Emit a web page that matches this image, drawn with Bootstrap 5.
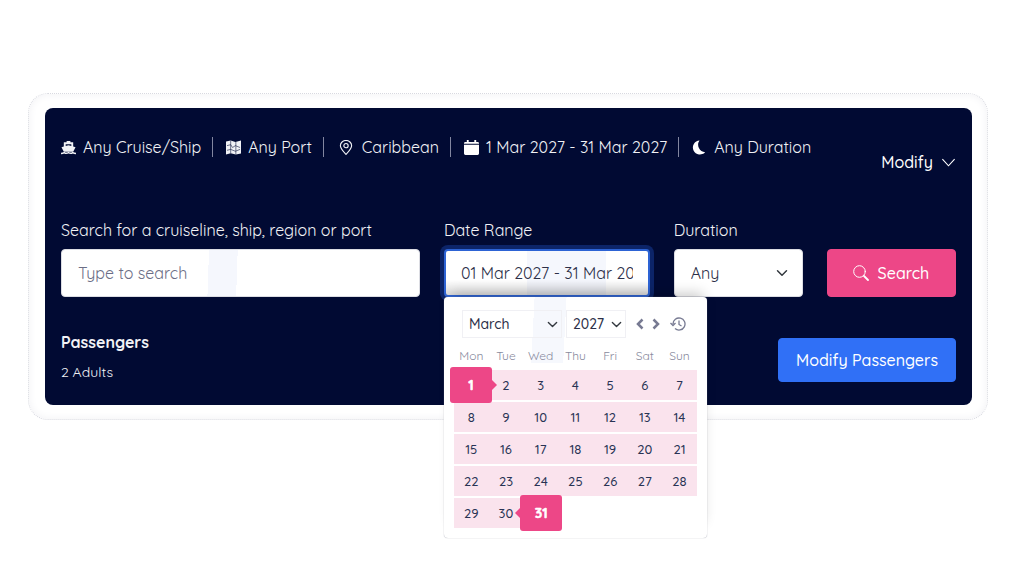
<!DOCTYPE html>
<html lang="en">
<head>
<meta charset="utf-8">
<meta name="viewport" content="width=device-width, initial-scale=1">
<title>Cruise search</title>
<link href="https://cdn.jsdelivr.net/npm/bootstrap@5.3.0/dist/css/bootstrap.min.css" rel="stylesheet">
<style>
  body { font-family: Quicksand, Lato, sans-serif; font-size: 16px; line-height: 24px; color: #2c2f48; background: #fff; }
  .page-wrap { padding: 93px 36px 32px 28px; }
  .frame { border: 1px dotted #d8d9e0; border-radius: 20px; padding: 14px 15px 14px 16px; background: #fff; box-shadow: inset 0 0 8px #f1f1f4; }
  .search-panel { background: #010a33; color: #f1f2f6; border-radius: 8px; padding: 16px; min-height: 297px; }
  .summary { padding-top: 13px; }
  .summary-item { display: flex; align-items: center; border-right: 1px solid #8286a0; height: 20px; white-space: nowrap; padding-right: 11px; margin-right: 13px; }
  .summary-item:last-child { border: 0; }
  .summary svg { margin-right: 7px; width: 15px; height: 15px; }
  .summary .pin-icon { width: 18px; }
  .modify-toggle { color: #fff; background: none; border: 0; padding: 0; margin-top: 26px; font-weight: 500; }
  .fields { margin-top: 44px; }
  .fields label { display: block; margin-bottom: 7px; }
  .field { height: 48px; border: 1px solid #dcdde3; border-radius: 4px; padding: 0 16px; font-size: 16px; color: #2c2f48; }
  .field::placeholder { color: #6c6e86; }
  .field-search { background: linear-gradient(92deg, transparent 41%, #f5f7fd 41%, #f5f7fd 49%, transparent 49%) #fff; }
  .field-date, .field-date:focus { border: 2px solid #2d63d4; padding: 0 15px; box-shadow: 0 0 0 4px #0c2468; background: linear-gradient(0deg, rgba(0,0,0,.14), transparent 35%), linear-gradient(90deg, transparent 40%, #f5f7fd 40%, #f5f7fd 79%, transparent 79%) #fff; }
  .field-duration { background-color: #fff; background-position: right 14px center; background-size: 12px; }
  .btn-search { background: #ed4787; border-color: #ed4787; color: #fff; height: 48px; margin-top: 31px; border-radius: 4px; font-size: 16px; font-weight: 500; }
  .btn-passengers { background: #3070f6; border-color: #3070f6; height: 44px; padding: 0 17px; border-radius: 4px; font-size: 16px; font-weight: 500; margin-top: 8px; }
  .calendar { position: absolute; top: 100%; left: 12px; z-index: 10; width: 263px; padding: 13px 10px 8px; background: linear-gradient(93deg, transparent 34%, #f6f8fd 34%, #f6f8fd 46%, transparent 46%) 0 0 / 100% 66px no-repeat #fff; border-radius: 4px; box-shadow: 0 0 1px #8c8e9c, 2px -10px 12px -6px rgba(0,0,0,.2); font-size: 13px; }
  .cal-select { height: 28px; border: 1px solid #f0f0f4; border-radius: 0; padding: 0 6px; font-size: 14px; font-weight: 500; line-height: 24px; color: #2c2f48; background-color: transparent; background-position: right 3px center; background-size: 11px; }
  .cal-month { width: 100px; }
  .cal-year { width: 60px; }
  .cal-btn { border: 0; background: none; padding: 0; display: flex; color: #777a92; }
  .cal-days { width: 243px; table-layout: fixed; border-collapse: separate; border-spacing: 0 2px; text-align: center; }
  .cal-days th { font-weight: 400; font-size: 12px; line-height: 20px; height: 28px; color: #888a9d; padding: 6px 0 2px; }
  .cal-days td { height: 30px; padding: 0; line-height: 30px; font-weight: 500; color: #283354; }
  .in-range { background: #fae3ed; }
  .edge { position: relative; display: block; width: 42px; height: 36px; margin: -3px -4px; line-height: 37px; background: #ed4787; color: #fff; font-weight: 700; font-size: 14px; -webkit-text-stroke: .5px #fff; border-radius: 3px; }
  .edge::after { content: ""; position: absolute; top: 13px; border: 5px solid transparent; }
  .edge-start::after { left: 100%; border-left-color: #ed4787; border-right: 0; }
  .edge-end { margin-left: -3px; }
  .edge-end::after { right: 100%; border-right-color: #ed4787; border-left: 0; }
  .passengers { margin-top: 33px; }
  .pax-count { font-size: 14px; margin-top: 6px; }
</style>
</head>
<body>
<main class="page-wrap min-vh-100">
  <div class="frame">
    <section class="search-panel">
      <header class="d-flex justify-content-between align-items-start">
        <div class="summary d-flex">
          <div class="summary-item">
            <svg viewBox="0 0 16 16" fill="currentColor"><path d="M6 1h4v1.500h3V7l2.500.8L13 12.500H3L.5 7.800 3 7V2.500h3zM5 4.500v2L8 5.500l3 1v-2z"/><path d="M0 14.500q2 0 3.500-1 2 1.500 4.500 0 2.500 1.500 4.500 0 1.500 1 3.500 1" fill="none" stroke="currentColor" stroke-width="1.600"/></svg>
            <span>Any Cruise/Ship</span>
          </div>
          <div class="summary-item">
            <svg viewBox="0 0 16 16" fill="currentColor"><path d="M0 1.500 5 .5l5 1.500 6-1.500v14l-5.500 1L5 14l-5 1.500z"/><path d="M5 .5V14M10.500 2v13.500M1 6l4-1 2 3 3-2 5 2M1 11l4-1 5 2 5-2" fill="none" stroke="#010a33" stroke-width=".6"/></svg>
            <span>Any Port</span>
          </div>
          <div class="summary-item">
            <svg class="pin-icon" viewBox="0 0 16 16" fill="none" stroke="currentColor" stroke-width="1.200"><path d="M8 15.300C5 12 2 9 2 6a6 5.500 0 0 1 12 0c0 3-3 6-6 9.300z"/><circle cx="8" cy="6" r="2.300"/></svg>
            <span>Caribbean</span>
          </div>
          <div class="summary-item">
            <svg viewBox="0 0 16 16" fill="#fff"><path d="M3 0h2v2h6V0h2v2h1.500q1.500 0 1.500 1.500V4H0v-.5Q0 2 1.500 2H3zM0 5h16v9.500q0 1.500-1.500 1.500h-13Q0 16 0 14.500z"/></svg>
            <span>1 Mar 2027 - 31 Mar 2027</span>
          </div>
          <div class="summary-item">
            <svg viewBox="0 0 16 16" fill="#fff"><path d="M8 .5A8 8 0 0 0 14 13 7.500 7.500 0 1 1 8 .5z"/></svg>
            <span>Any Duration</span>
          </div>
        </div>
        <button class="modify-toggle d-flex align-items-center gap-2" type="button">Modify
          <svg width="15" height="15" viewBox="0 0 16 16" fill="none" stroke="currentColor" stroke-width="1.200"><path d="m1.500 4.500 6.500 7 6.500-7"/></svg>
        </button>
      </header>
      <form class="fields" onsubmit="return false">
        <div class="row gx-4">
          <div class="col-5">
            <label for="q">Search for a cruiseline, ship, region or port</label>
            <input id="q" class="field field-search form-control" type="text" placeholder="Type to search">
          </div>
          <div class="col-3 position-relative">
            <label for="dates">Date Range</label>
            <input id="dates" class="field field-date form-control" type="text" value="01 Mar 2027 - 31 Mar 20">
            <div class="calendar">
              <div class="d-flex align-items-center ps-2">
                <select class="cal-select cal-month form-select me-1" aria-label="Month"><option>March</option></select>
                <select class="cal-select cal-year form-select" aria-label="Year"><option>2027</option></select>
                <button class="cal-btn ms-2" type="button" aria-label="Previous month"><svg width="12" height="12" viewBox="0 0 12 12" fill="none" stroke="currentColor" stroke-width="2.500"><path d="M8.500 1.500 4 6l4.500 4.500"/></svg></button>
                <button class="cal-btn ms-1" type="button" aria-label="Next month"><svg width="12" height="12" viewBox="0 0 12 12" fill="none" stroke="currentColor" stroke-width="2.500"><path d="M3.500 1.500 8 6l-4.500 4.500"/></svg></button>
                <button class="cal-btn ms-2" type="button" aria-label="Reset"><svg width="16" height="16" viewBox="0 0 16 16" fill="none" stroke="currentColor" stroke-width="1.300"><path d="M3 8a6 6 0 1 1 2 4.500M.5 7 3 9.500 5.500 7M9 4.500v4l2.500 1.500"/></svg></button>
              </div>
              <table class="cal-days">
                <thead><tr><th>Mon</th><th>Tue</th><th>Wed</th><th>Thu</th><th>Fri</th><th>Sat</th><th>Sun</th></tr></thead>
                <tbody>
                  <tr><td class="in-range"><span class="edge edge-start">1</span></td><td class="in-range">2</td><td class="in-range">3</td><td class="in-range">4</td><td class="in-range">5</td><td class="in-range">6</td><td class="in-range">7</td></tr>
                  <tr><td class="in-range">8</td><td class="in-range">9</td><td class="in-range">10</td><td class="in-range">11</td><td class="in-range">12</td><td class="in-range">13</td><td class="in-range">14</td></tr>
                  <tr><td class="in-range">15</td><td class="in-range">16</td><td class="in-range">17</td><td class="in-range">18</td><td class="in-range">19</td><td class="in-range">20</td><td class="in-range">21</td></tr>
                  <tr><td class="in-range">22</td><td class="in-range">23</td><td class="in-range">24</td><td class="in-range">25</td><td class="in-range">26</td><td class="in-range">27</td><td class="in-range">28</td></tr>
                  <tr><td class="in-range">29</td><td class="in-range">30</td><td class="in-range"><span class="edge edge-end">31</span></td><td></td><td></td><td></td><td></td></tr>
                </tbody>
              </table>
            </div>
          </div>
          <div class="col-2">
            <label for="duration">Duration</label>
            <select id="duration" class="field field-duration form-select"><option>Any</option></select>
          </div>
          <div class="col-2">
            <button class="btn btn-search w-100 d-flex align-items-center justify-content-center gap-2" type="submit">
              <svg width="16" height="16" viewBox="0 0 16 16" fill="none" stroke="currentColor" stroke-linecap="round"><circle cx="6.500" cy="6.500" r="5.800"/><path d="m11 11 4 4" stroke-width="1.800"/></svg>
              Search</button>
          </div>
        </div>
        <div class="passengers d-flex justify-content-between align-items-start">
          <div><div class="fw-bold">Passengers</div><div class="pax-count">2 Adults</div></div>
          <button class="btn btn-primary btn-passengers" type="button">Modify Passengers</button>
        </div>
      </form>
    </section>
  </div>
</main>
<script src="https://cdn.jsdelivr.net/npm/bootstrap@5.3.0/dist/js/bootstrap.bundle.min.js"></script>
</body>
</html>
